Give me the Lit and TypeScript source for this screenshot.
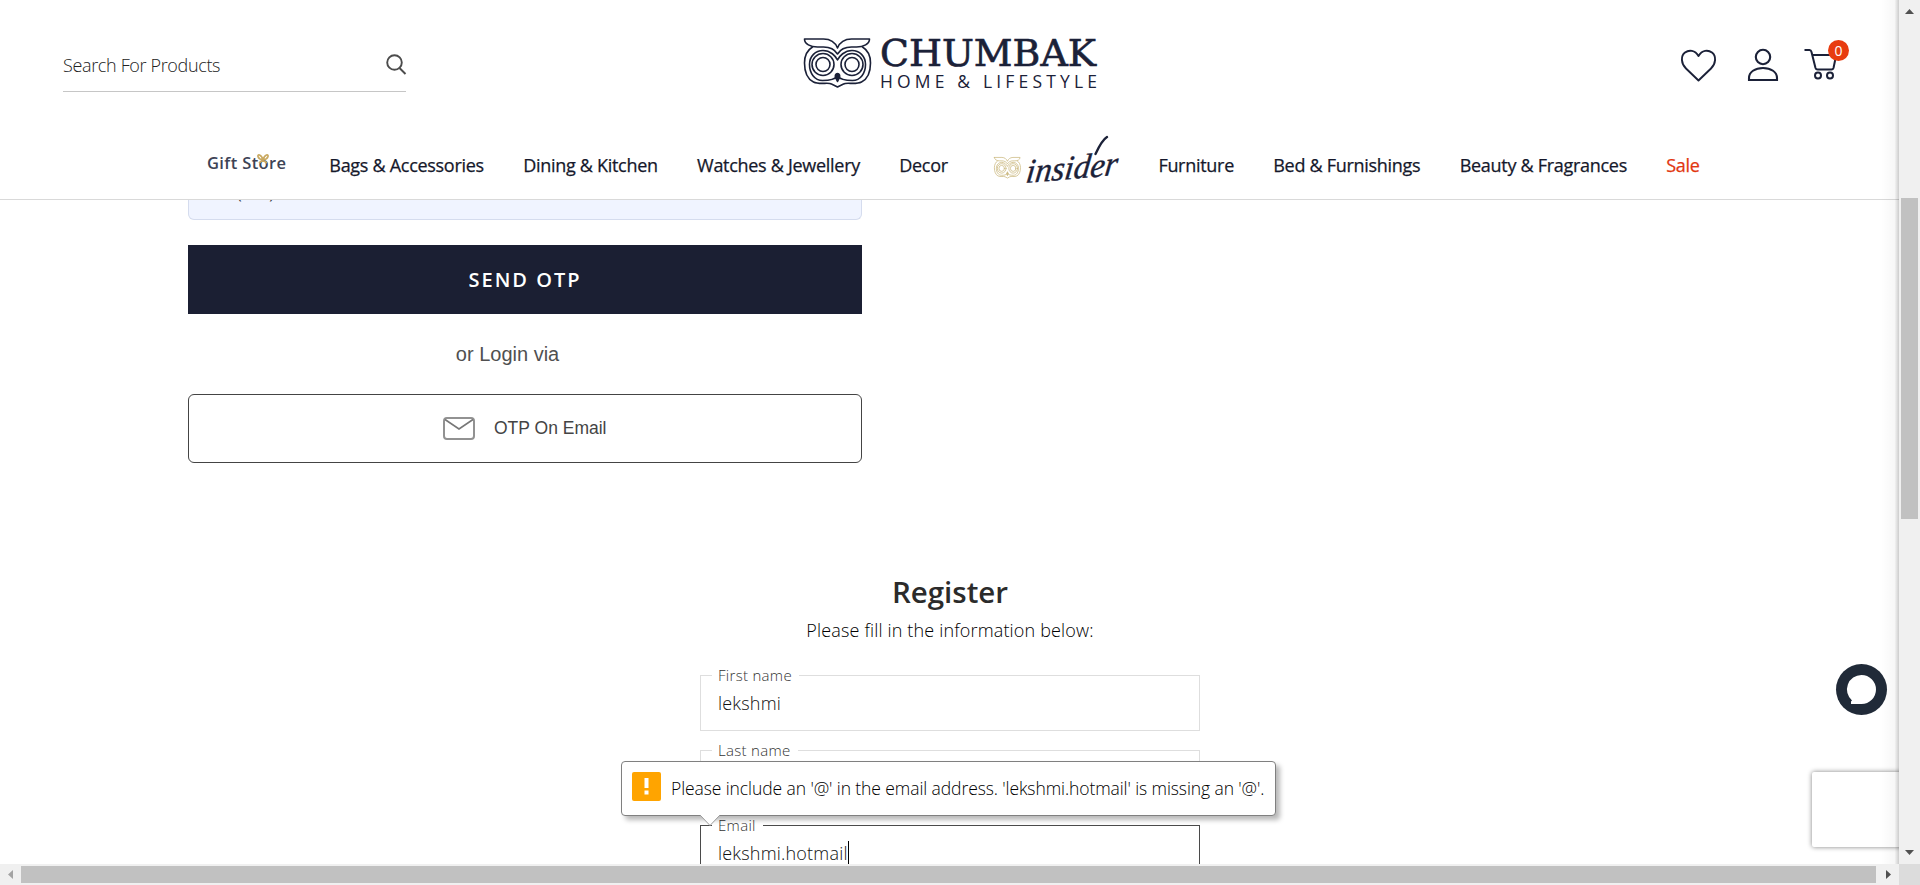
import { LitElement, html, css, svg } from "lit";
import { customElement, property } from "lit/decorators.js";
import { classMap } from "lit/directives/class-map.js";

const owl = (stroke: string, width: number) => svg`
  <g fill="none" stroke=${stroke} stroke-width=${width} stroke-linejoin="round" stroke-linecap="round">
    <path d="M1 1H20C27 1 32 5 34 10C36 5 41 1 48 1H66C66 6 60 9 53 9H48C42 9 37 11 34 16C31 11 26 9 20 9H14C7 9 1 6 1 1Z"/>
    <path d="M9 9C4 12 1 18 1 25C1 34 4 41 10 44C16 47 25 44 28 46C30 47 32 48 34 49C36 48 38 47 40 46C43 44 52 47 58 44C64 41 67 34 67 25C67 18 64 12 59 9"/>
    <path d="M34 38C31 42 26 42.500 19 42.500C11 42.500 6 35 6 26.500C6 18 12 12.500 19.500 12.500C27 12.500 32 18 34 22C36 18 41 12.500 48.500 12.500C56 12.500 62 18 62 26.500C62 35 57 42.500 49 42.500C42 42.500 37 42 34 38Z"/>
    <circle cx="19.500" cy="26.500" r="11"/><circle cx="19.500" cy="26.500" r="7"/>
    <circle cx="48.500" cy="26.500" r="11"/><circle cx="48.500" cy="26.500" r="7"/>
    <path d="M34 35.500C32 35.500 31.500 37.500 32 39.500L34 43.500L36 39.500C36.500 37.500 36 35.500 34 35.500Z" fill=${stroke}/>
  </g>`;

@customElement("form-field")
class FormField extends LitElement {
  @property() label = "";
  @property() value = "";
  @property({ type: Boolean }) focused = false;

  static styles = css`
    :host { display: block; }
    .field {
      box-sizing: border-box; height: 66px; margin: 0; padding: 0 0 0 11px;
      border: 1px solid #dedede; min-width: 0;
    }
    .field.focused { border-color: #4a4a4a; }
    .legend {
      height: 20px; line-height: 20px; padding: 0 7px 0 6px; font-size: 15px;
      color: #333; font-weight: 300; letter-spacing: 0.3px;
    }
    .value {
      display: flex; align-items: center; height: 27px; padding-left: 6px; margin-top: 4px;
      font-size: 18px; font-weight: 300; color: #111; letter-spacing: 0.2px;
    }
    .caret { width: 1px; height: 24px; background: #000; }
  `;

  render() {
    return html`
      <fieldset class=${classMap({ field: true, focused: this.focused })}>
        <legend class="legend">${this.label}</legend>
        <div class="value">${this.value}${this.focused ? html`<span class="caret"></span>` : ""}</div>
      </fieldset>`;
  }
}

@customElement("app-root")
class AppRoot extends LitElement {
  static styles = css`
    :host {
      display: grid; grid-template-columns: 1899px 21px; grid-template-rows: 864px 21px;
      width: 1920px; height: 885px; overflow: hidden; background: #fff;
      font-family: "Open Sans", sans-serif; color: #1b1f33;
    }
    svg { display: block; overflow: visible; }
    .page { position: relative; overflow: hidden; display: flex; flex-direction: column; }
    .header {
      flex: none; box-sizing: border-box; height: 200px; border-bottom: 1px solid #d9d9d9;
      display: flex; flex-direction: column; background: #fff;
    }
    .top {
      height: 131px; box-sizing: border-box; padding: 0 49px 0 63px;
      display: grid; grid-template-columns: 740px 1fr auto; align-items: start;
    }
    .search {
      box-sizing: border-box; width: 343px; height: 52px; margin-top: 40px;
      border-bottom: 1px solid #c6c6c6; display: flex; justify-content: space-between;
      padding: 0 0 2px; align-items: center;
      font-size: 18px; font-weight: 300; color: #222; letter-spacing: -0.35px;
    }
    .logo { margin-top: 37px; }
    .brand { font: 37px "DejaVu Serif", serif; font-stretch: condensed; fill: #1b2138; stroke: #1b2138; stroke-width: 0.6px; }
    .tagline { font: 17.500px "Open Sans", sans-serif; fill: #1b2138; }
    .actions { display: flex; margin-top: 48px; }
    .heart { margin-right: 32px; }
    .user { margin-right: 26px; }
    .cart { position: relative; }
    .badge {
      position: absolute; left: 24px; top: -8px; width: 21px; height: 21px; border-radius: 50%;
      background: #e83c10; color: #fff; font-size: 14px; font-weight: 500; line-height: 21px; text-align: center;
    }
    .nav { display: flex; align-items: center; height: 68px; padding-left: 207px; gap: 39.300px; }
    .link {
      font-size: 18px; font-weight: 500; line-height: 24px; white-space: nowrap; letter-spacing: -0.29px;
      color: #15182b; -webkit-text-stroke: 0.25px currentColor;
    }
    .link.sale { color: #e2360f; }
    .gift { margin: -5px 4px 0 0; }
    .gift-text { font: 600 16.500px "Open Sans", sans-serif; fill: #3d4355; }
    .insider { margin: 0 0 0 6px; }
    .script { font: italic 34px "Liberation Serif", serif; fill: #1b2138; stroke: #1b2138; stroke-width: 0.4px; }
    .login { flex: none; width: 674px; margin-left: 188px; display: flex; flex-direction: column; }
    .phone {
      height: 19px; box-sizing: content-box; width: 672px; overflow: hidden; background: #f0f4ff;
      border: 1px solid #d5dcee; border-top: 0; border-radius: 0 0 6px 6px;
    }
    .phone-text { margin: -18px 0 0 48px; font-size: 16px; line-height: 22px; color: #333; }
    .send {
      margin-top: 25px; height: 69px; background: #1b1f33; color: #fff; font-size: 20px; font-weight: 600;
      letter-spacing: 2px; display: flex; align-items: center; justify-content: center;
    }
    .via {
      height: 80px; width: 639px; text-align: center; line-height: 80px; font-family: "Liberation Sans", sans-serif;
      font-size: 20px; color: #505050;
    }
    .otp {
      box-sizing: border-box; height: 69px; border: 1px solid #444; border-radius: 6px;
      display: flex; align-items: center; padding-left: 254px; gap: 19px;
      font-family: "Liberation Sans", sans-serif; font-size: 17.500px; color: #444;
    }
    .register { flex: none; width: 500px; margin: 107px 0 0 700px; display: flex; flex-direction: column; }
    .title { margin: 0; font-size: 29.500px; font-weight: 600; line-height: 44px; text-align: center; color: #2b2b2b; }
    .hint { margin: 0; font-size: 18px; font-weight: 300; line-height: 32px; text-align: center; color: #000; letter-spacing: 0.16px; }
    .fields { display: flex; flex-direction: column; gap: 9px; margin-top: 19px; }
    .tooltip {
      position: absolute; left: 621px; top: 761px; width: 655px; height: 55px; box-sizing: border-box;
      border: 1px solid #808080; border-radius: 4px; background: #fff; box-shadow: 4px 4px 5px rgba(0,0,0,.28);
      display: flex; align-items: center; padding: 0 0 5px 10px; gap: 10px; white-space: nowrap;
      font-size: 17.500px; font-weight: 300; color: #000; letter-spacing: -0.09px;
    }
    .message { padding-top: 4px; }
    .pointer { position: absolute; left: 78px; top: 53px; }
    .chat { position: absolute; left: 1836px; top: 664px; }
    .captcha {
      position: absolute; left: 1812px; top: 772px; width: 256px; height: 75px; border-radius: 2px;
      background: #fff; box-shadow: 0 0 5px gray;
    }
    .edge { position: absolute; right: 0; top: 0; width: 18px; height: 864px; background: linear-gradient(to right, transparent, rgba(0,0,0,.03) 75%, rgba(0,0,0,.2)); }
    .vbar { background: #f0f0f0; display: flex; flex-direction: column; align-items: center; }
    .vthumb { width: 17px; height: 321px; background: #c1c1c1; margin-top: 175px; }
    .hbar { background: #f0f0f0; display: flex; align-items: center; }
    .hthumb { flex: none; width: 1855px; height: 17px; background: #c1c1c1; }
    .corner { background: #dcdcdc; }
    .up { height: 23px; display: grid; place-items: center; }
    .down { margin-top: 331px; }
    .arrow { flex: none; width: 21px; display: grid; place-items: center; }
    .arrow.right { width: 24px; }
  `;

  links(items: string[]) {
    return items.map((t) => html`<span class=${classMap({ link: true, sale: t === "Sale" })}>${t}</span>`);
  }

  render() {
    return html`
      <div class="page">
        <header class="header">
          <div class="top">
            <div class="search">
              <span>Search For Products</span>
              <svg width="20" height="20" fill="none" stroke="#4c4c4c" stroke-width="1.900"><circle cx="8.500" cy="7.500" r="7.300"/><path d="M13.500 13L19.500 19"/></svg>
            </div>
            <svg class="logo" width="294" height="52">
              <g transform="translate(0.500 1)">${owl("#1b2138", 1.6)}</g>
              <text class="brand" x="77" y="28.500" textLength="216" lengthAdjust="spacingAndGlyphs">CHUMBAK</text>
              <text class="tagline" x="77" y="50.500" textLength="217">HOME &amp; LIFESTYLE</text>
            </svg>
            <div class="actions">
              <svg class="heart" width="35" height="34" fill="none" stroke="#1b2138" stroke-width="1.900" stroke-linejoin="round"><path d="M17.500 32.500L5 20.500C0 15.500 -.5 8 4 4.500C8 1.500 14 2 17.500 8C21 2 27 1.500 31 4.500C35.500 8 35 15.500 30 20.500Z"/></svg>
              <svg class="user" width="30" height="34" fill="none" stroke="#1b2138" stroke-width="2.100"><circle cx="15" cy="9" r="7.200"/><path d="M1 32V30C1 24 7 20 15 20S29 24 29 30V32Z"/></svg>
              <div class="cart">
                <svg width="46" height="34" fill="none" stroke="#1b2138" stroke-width="2" stroke-linejoin="round"><path d="M.5 2H5.500Q7 2 7.500 4L11.500 20Q12 21.500 13.500 21.500H27.500Q29 21.500 29.500 20L32 8M8.500 7H30"/><circle cx="14" cy="27.500" r="3"/><circle cx="26" cy="27.500" r="3"/></svg>
                <span class="badge">0</span>
              </div>
            </div>
          </div>
          <nav class="nav">
            <svg class="gift" width="79" height="24">
              <text class="gift-text" x="0" y="18" textLength="79">Gift Store</text>
              <path d="M56 9C50 8 50 3 52.500 4S55.500 7 56 9C56.500 7 57 5 59.500 4S62 8 56 9L52 12M56 9L60 12" fill="none" stroke="#c9a961" stroke-width="1.700"/>
            </svg>
            ${this.links(["Bags & Accessories", "Dining & Kitchen", "Watches & Jewellery", "Decor"])}
            <svg class="insider" width="126" height="50">
              <g transform="translate(1 17) scale(.395 .43)">${owl("#cdbb84", 1.9)}</g>
              <text class="script" x="0" y="0" textLength="92" lengthAdjust="spacingAndGlyphs" transform="translate(32 43) rotate(-5) skewX(-12)">insider</text>
              <path d="M114 -3Q109 0 102.500 14" fill="none" stroke="#1b2138" stroke-width="2.400" stroke-linecap="round"/>
            </svg>
            ${this.links(["Furniture", "Bed & Furnishings", "Beauty & Fragrances", "Sale"])}
          </nav>
        </header>
        <section class="login">
          <div class="phone"><div class="phone-text">(+91)</div></div>
          <div class="send">SEND OTP</div>
          <div class="via">or Login via</div>
          <div class="otp">
            <svg width="32" height="23" fill="none" stroke="#929292" stroke-width="2"><rect x="1" y="1" width="30" height="21" rx="3"/><path d="M2 2.500L16 12L30 2.500" stroke="#777" stroke-width="1.600"/></svg>
            <span>OTP On Email</span>
          </div>
        </section>
        <section class="register">
          <h1 class="title">Register</h1>
          <p class="hint">Please fill in the information below:</p>
          <div class="fields">
            <form-field label="First name" value="lekshmi"></form-field>
            <form-field label="Last name"></form-field>
            <form-field label="Email" value="lekshmi.hotmail" focused></form-field>
          </div>
        </section>
        <div class="tooltip">
          <svg width="29" height="29"><rect width="29" height="29" rx="2" fill="#ffa400"/><path d="M12.500 6h4v10h-4zM12.500 18.500h4v4h-4z" fill="#fff"/></svg>
          <span class="message">Please include an '@' in the email address. 'lekshmi.hotmail' is missing an '@'.</span>
          <svg class="pointer" width="20" height="12"><path d="M0 0L10 10.500L20 0" fill="#fff" stroke="#9a9a9a"/><path d="M1 -1H19V.5H1Z" fill="#fff"/></svg>
        </div>
        <svg class="chat" width="51" height="51"><circle cx="25.500" cy="25.500" r="25.500" fill="#202a38"/><path d="M25.500 11A14.500 14.500 0 1 1 25.500 40H15V37.500L16 36.500A14.500 14.500 0 0 1 25.500 11Z" fill="#fff"/></svg>
        <div class="captcha"></div>
        <div class="edge"></div>
      </div>
      <div class="vbar">
        <div class="up"><svg width="9" height="5"><path d="M0 5L4.500 0L9 5Z" fill="#505050"/></svg></div>
        <div class="vthumb"></div>
        <div class="down"><svg width="9" height="5"><path d="M0 0L4.500 5L9 0Z" fill="#505050"/></svg></div>
      </div>
      <div class="hbar">
        <div class="arrow"><svg width="5" height="9"><path d="M5 0L0 4.500L5 9Z" fill="#a3a3a3"/></svg></div>
        <div class="hthumb"></div>
        <div class="arrow right"><svg width="5" height="9"><path d="M0 0L5 4.500L0 9Z" fill="#505050"/></svg></div>
      </div>
      <div class="corner"></div>`;
  }
}
